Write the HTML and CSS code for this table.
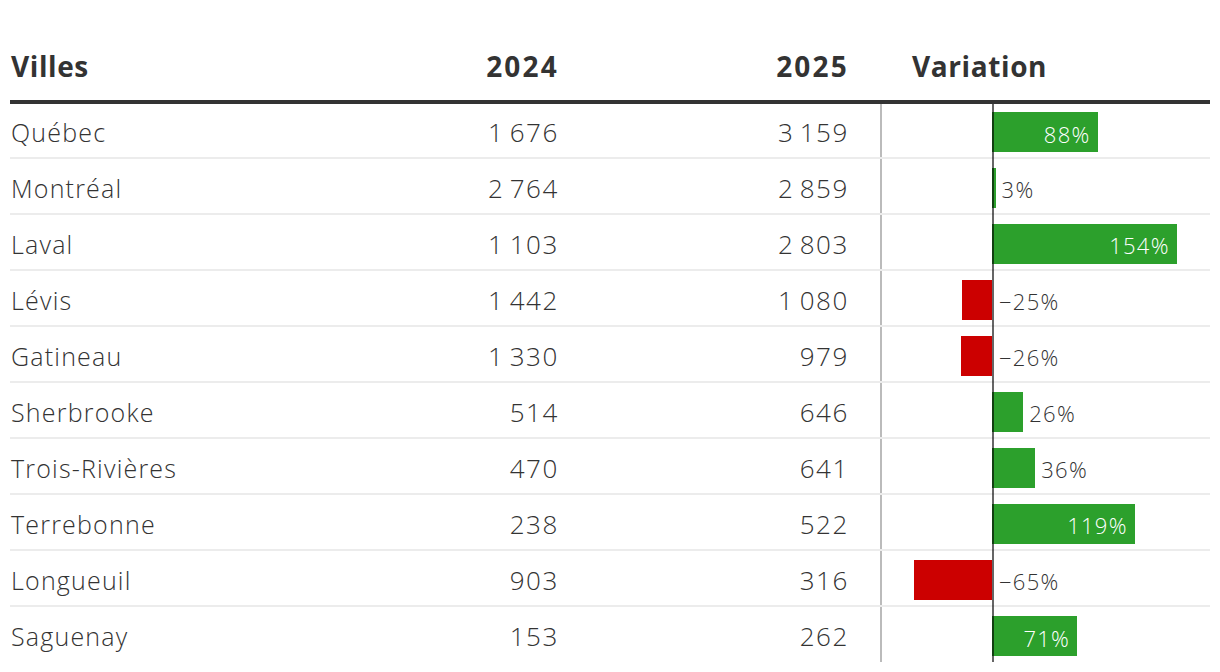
FILE: index.html
```html
<!DOCTYPE html>
<html lang="fr">
<head>
<meta charset="utf-8">
<title>Villes</title>
<link rel="stylesheet" href="styles.css">
</head>
<body>
<div class="table">
  <div class="head">
    <div class="c-name">Villes</div>
    <div class="c-num c-2024">2024</div>
    <div class="c-num c-2025">2025</div>
    <div class="c-chart-h">Variation</div>
  </div>
  <div class="body">
    <div class="row first">
      <div class="c-name">Québec</div>
      <div class="c-num c-2024">1 676</div>
      <div class="c-num c-2025">3 159</div>
      <div class="c-chart"><div class="neg"></div><div class="pos"><div class="bar up in" style="width:105.6px"><span>88%</span></div></div></div>
    </div>
    <div class="row">
      <div class="c-name">Montréal</div>
      <div class="c-num c-2024">2 764</div>
      <div class="c-num c-2025">2 859</div>
      <div class="c-chart"><div class="neg"></div><div class="pos"><div class="bar up" style="width:3.6px"></div><span class="lbl">3%</span></div></div>
    </div>
    <div class="row">
      <div class="c-name">Laval</div>
      <div class="c-num c-2024">1 103</div>
      <div class="c-num c-2025">2 803</div>
      <div class="c-chart"><div class="neg"></div><div class="pos"><div class="bar up in" style="width:184.8px"><span>154%</span></div></div></div>
    </div>
    <div class="row">
      <div class="c-name">Lévis</div>
      <div class="c-num c-2024">1 442</div>
      <div class="c-num c-2025">1 080</div>
      <div class="c-chart"><div class="neg"><div class="bar down" style="width:30px"></div></div><div class="pos"><span class="lbl nl">−25%</span></div></div>
    </div>
    <div class="row">
      <div class="c-name">Gatineau</div>
      <div class="c-num c-2024">1 330</div>
      <div class="c-num c-2025">979</div>
      <div class="c-chart"><div class="neg"><div class="bar down" style="width:31.2px"></div></div><div class="pos"><span class="lbl nl">−26%</span></div></div>
    </div>
    <div class="row">
      <div class="c-name">Sherbrooke</div>
      <div class="c-num c-2024">514</div>
      <div class="c-num c-2025">646</div>
      <div class="c-chart"><div class="neg"></div><div class="pos"><div class="bar up" style="width:31.2px"></div><span class="lbl">26%</span></div></div>
    </div>
    <div class="row">
      <div class="c-name">Trois-Rivières</div>
      <div class="c-num c-2024">470</div>
      <div class="c-num c-2025">641</div>
      <div class="c-chart"><div class="neg"></div><div class="pos"><div class="bar up" style="width:43.2px"></div><span class="lbl">36%</span></div></div>
    </div>
    <div class="row">
      <div class="c-name">Terrebonne</div>
      <div class="c-num c-2024">238</div>
      <div class="c-num c-2025">522</div>
      <div class="c-chart"><div class="neg"></div><div class="pos"><div class="bar up in" style="width:142.8px"><span>119%</span></div></div></div>
    </div>
    <div class="row">
      <div class="c-name">Longueuil</div>
      <div class="c-num c-2024">903</div>
      <div class="c-num c-2025">316</div>
      <div class="c-chart"><div class="neg"><div class="bar down" style="width:78px"></div></div><div class="pos"><span class="lbl nl">−65%</span></div></div>
    </div>
    <div class="row last">
      <div class="c-name">Saguenay</div>
      <div class="c-num c-2024">153</div>
      <div class="c-num c-2025">262</div>
      <div class="c-chart"><div class="neg"></div><div class="pos"><div class="bar up in" style="width:85.2px"><span>71%</span></div></div></div>
    </div>
  </div>
</div>
</body>
</html>
```

FILE: styles.css
```css
html, body {
  margin: 0;
  padding: 0;
  background: #fff;
}

.table {
  margin: 0 10px;
  width: 1200px;
  color: #333;
}

.head {
  display: flex;
  align-items: flex-end;
  height: 104px;
  box-sizing: border-box;
  padding-bottom: 17px;
  border-bottom: 4px solid #333;
  font-family: "Open Sans", "Lato", sans-serif;
  font-weight: 700;
  font-size: 28px;
  line-height: 34px;
  letter-spacing: 0.6px;
  color: #333;
}

.c-name {
  width: 300px;
  flex: none;
  padding-left: 1px;
  box-sizing: border-box;
}

.c-num {
  flex: none;
  text-align: right;
  box-sizing: border-box;
  padding-right: 33px;
}

.head .c-num {
  letter-spacing: 2.2px;
  padding-right: 31px;
}

.c-2024 { width: 280px; }
.c-2025 { width: 290px; }

.c-chart-h {
  flex: 1;
  padding-left: 32px;
}

.row {
  display: flex;
  height: 56px;
  box-sizing: border-box;
  border-bottom: 2px solid #ececec;
  font-family: "Open Sans", "Lato", sans-serif;
  font-weight: 300;
  font-size: 25px;
  letter-spacing: 1.2px;
  color: #333;
}

.row.first { height: 55px; }
.row.last { border-bottom: none; height: 55px; }

.row .c-name,
.row .c-num {
  display: flex;
  align-items: center;
  padding-top: 3px;
}

.row .c-num {
  justify-content: flex-end;
  font-size: 26px;
  letter-spacing: 1.6px;
  word-spacing: -3px;
  padding-right: 31px;
}

.c-chart {
  flex: 1;
  display: flex;
  position: relative;
  border-left: 2px solid #bbb;
  padding-top: 3px;
  letter-spacing: 0;
}

.c-chart::after {
  content: "";
  position: absolute;
  left: 110px;
  top: 0;
  bottom: -2px;
  width: 2px;
  background: rgba(0, 0, 0, 0.6);
}

.neg {
  width: 110px;
  flex: none;
  display: flex;
  justify-content: flex-end;
  align-items: center;
}

.pos {
  flex: 1;
  display: flex;
  align-items: center;
}

.bar {
  height: 40px;
  flex: none;
  box-sizing: border-box;
}

.bar.up { background: #2ca02c; }
.bar.down { background: #cc0000; }

.bar.in {
  display: flex;
  align-items: center;
  justify-content: flex-end;
  padding-right: 7px;
}

.bar.in span,
.lbl {
  font-family: "Open Sans", "Lato", sans-serif;
  font-weight: 300;
  font-size: 22px;
  letter-spacing: 1.3px;
  padding-top: 3px;
}

.bar.in span { color: #fff; }

.lbl {
  color: #333;
  margin-left: 6px;
}

.lbl.nl { margin-left: 7px; }
```
